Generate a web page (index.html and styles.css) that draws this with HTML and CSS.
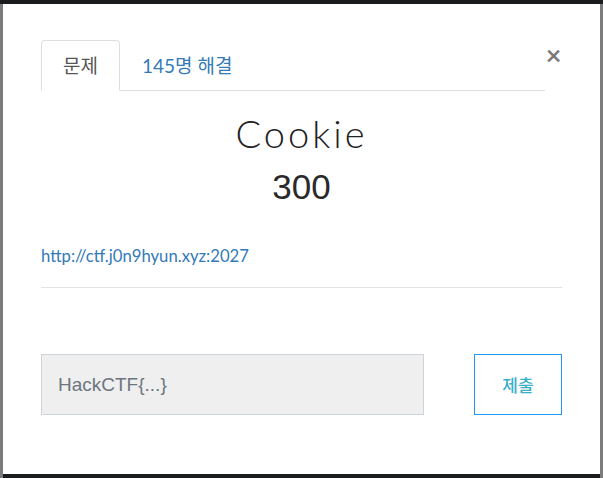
FILE: index.html
```html
<!DOCTYPE html>
<html lang="ko">
<head>
    <meta charset="UTF-8">
    <meta name="viewport" content="width=device-width, initial-scale=1.0">
    <title>Cookie</title>
    <link rel="stylesheet" href="styles.css">
</head>
<body>

<div class="frame">
    <div class="modal">
        <div class="modal-head">
            <ul class="tabs">
                <li class="tab active">문제</li>
                <li class="tab">145명 해결</li>
            </ul>
            <button class="close" type="button">&times;</button>
        </div>

        <h1 class="title">Cookie</h1>
        <div class="points">300</div>

        <div class="desc">
            <a href="#">http://ctf.j0n9hyun.xyz:2027</a>
        </div>
        <hr>

        <form class="submit-row">
            <input type="text" placeholder="HackCTF{...}">
            <button type="submit" class="submit-btn">제출</button>
        </form>
    </div>
</div>

</body>
</html>
```

FILE: styles.css
```css
html, body {
    margin: 0;
    height: 100%;
}
body {
    background: #1a1c1d;
    padding-top: 4px;
    box-sizing: border-box;
    font-family: Lato, "Noto Sans CJK KR", sans-serif;
}
.frame {
    height: 474px;
    border-left: 3px solid #7c7c7c;
    border-right: 3px solid #7c7c7c;
    box-sizing: border-box;
}
.modal {
    background: white;
    height: 470px;
    padding: 36px 38px 0 38px;
    box-sizing: border-box;
}
.modal-head {
    display: flex;
    align-items: flex-start;
}
.tabs {
    list-style: none;
    margin: 0;
    padding: 0;
    display: flex;
    width: 504px;
    border-bottom: 1px solid #dedede;
}
.tab {
    height: 49px;
    padding: 0 21px;
    font-size: 19px;
    line-height: 49px;
    color: #337ab7;
    border: 1px solid transparent;
    border-radius: 4px 4px 0 0;
    margin-bottom: -1px;
}
.tab.active {
    color: #555;
    background: white;
    border-color: #dedede;
    border-bottom-color: white;
    padding: 0 10px;
    width: 57px;
    text-align: center;
}
.close {
    margin: 3px 0 0 0;
    padding: 0;
    width: 17px;
    background: none;
    border: none;
    font-family: Lato, sans-serif;
    font-size: 27px;
    font-weight: 700;
    line-height: 24px;
    color: #7a7a7a;
    margin-left: auto;
}
.title {
    margin: 20px 0 0 0;
    text-align: center;
    font-size: 38px;
    font-weight: 300;
    letter-spacing: 3px;
    color: #222;
    line-height: 44px;
}
.points {
    margin-top: 10px;
    text-align: center;
    font-family: "Liberation Sans", sans-serif;
    font-size: 35px;
    color: #2a2a2a;
    line-height: 44px;
}
.desc {
    margin-top: 36px;
    font-size: 16.7px;
    line-height: 22px;
}
.desc a {
    color: #337ab7;
    text-decoration: none;
}
hr {
    margin: 20px 0 0 0;
    border: none;
    border-top: 1px solid #e3e3e3;
}
.submit-row {
    display: flex;
    justify-content: space-between;
    margin-top: 66px;
}
.submit-row input {
    width: 383px;
    height: 61px;
    box-sizing: border-box;
    padding: 0 16px;
    font-family: "Liberation Sans", sans-serif;
    font-size: 19px;
    background: #efefef;
    border: 1px solid #ccd3da;
    color: #555;
}
.submit-row input::placeholder {
    color: #6c757d;
}
.submit-btn {
    width: 88px;
    height: 61px;
    background: white;
    border: 1px solid #2196f3;
    font-family: "Noto Sans CJK KR", sans-serif;
    font-size: 17px;
    font-weight: 500;
    color: #3aafc8;
    cursor: pointer;
}
```
